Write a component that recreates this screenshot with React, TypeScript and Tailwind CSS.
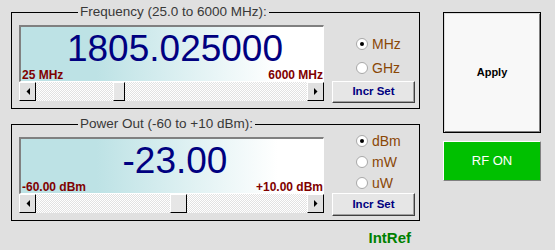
import type { ReactNode } from "react";

type Option = { label: string; checked?: boolean };

function GroupBox({ title, children }: { title: string; children: ReactNode }) {
  return (
    <div className="relative flex h-[97px] w-[409px] border border-black">
      <span className="absolute -top-[9px] left-[66px] bg-[#e0e0e0] px-[2px] text-[13.5px] leading-[16px] text-[#383838]">
        {title}
      </span>
      {children}
    </div>
  );
}

function Arrow({ dir }: { dir: "left" | "right" }) {
  return (
    <div className="flex h-full w-[17px] items-center justify-center border border-t-white border-l-white border-r-black border-b-black bg-[#e0e0e0]">
      <svg width="4" height="7" viewBox="0 0 4 7">
        {dir === "left" ? (
          <polygon points="4,0 4,7 0.5,3.5" fill="#000" />
        ) : (
          <polygon points="0,0 0,7 3.5,3.5" fill="#000" />
        )}
      </svg>
    </div>
  );
}

function ScrollBar({ thumbLeft }: { thumbLeft: "freq" | "power" }) {
  return (
    <div className="relative flex h-[19px] w-full bg-[repeating-conic-gradient(#ffffff_0_25%,#e2e2e2_0_50%)] bg-[length:2px_2px]">
      <Arrow dir="left" />
      <div className="flex-1" />
      <Arrow dir="right" />
      {thumbLeft === "freq" ? (
        <div className="absolute top-0 left-[94px] h-full w-[12px] border border-t-white border-l-white border-r-black border-b-black bg-[#e6e6e6]" />
      ) : (
        <div className="absolute top-0 left-[151px] h-full w-[17px] border border-t-white border-l-white border-r-black border-b-black bg-[#e6e6e6]" />
      )}
    </div>
  );
}

function Display({ value, min, max }: { value: string; min: string; max: string }) {
  return (
    <div className="flex h-[57px] w-[305px] flex-col border-2 border-r border-b border-t-[#808080] border-l-[#808080] border-r-white border-b-white bg-[linear-gradient(to_right,#bde2e5_25%,#ffffff_85%)]">
      <div className="pt-[3px] pl-[6px] text-center text-[37px] leading-none text-[#000080]">
        {value}
      </div>
      <div className="mt-auto flex h-[12px] justify-between pl-[1px] text-[12px] leading-none font-bold text-[#800000]">
        <span>{min}</span>
        <span>{max}</span>
      </div>
    </div>
  );
}

function Radio({ label, checked }: Option) {
  return (
    <div className="flex h-full items-center">
      <div className="flex h-[12px] w-[12px] items-center justify-center rounded-full border border-[#a8a8a8] bg-white">
        {checked && <div className="h-[4px] w-[4px] rounded-full bg-black" />}
      </div>
      <span className="ml-[4px] text-[14px] leading-none text-[#8a4706]">{label}</span>
    </div>
  );
}

function IncrSet({ h }: { h: string }) {
  return (
    <button
      type="button"
      className={[
        "flex w-[83px] items-center justify-center border border-t-white border-l-white border-r-[#404040] border-b-[#404040] bg-[#e6e6e6] text-[11.5px] font-bold text-[#000080] shadow-[inset_-1px_-1px_0_#a0a0a0]",
        h,
      ].join(" ")}
    >
      Incr Set
    </button>
  );
}

export default function App() {
  return (
    <div className="flex h-[250px] w-[555px] bg-[#e0e0e0] pl-[11px] font-['Liberation_Sans',Arial,sans-serif]">
      <div className="flex flex-col">
        <div className="mt-[12px]">
          <GroupBox title="Frequency (25.0 to 6000 MHz):">
            <div className="mt-[12px] ml-[7px] flex flex-col">
              <Display value="1805.025000" min="25 MHz" max="6000 MHz" />
              <ScrollBar thumbLeft="freq" />
            </div>
            <div className="ml-[8px] flex flex-col pt-[19px]">
              <div className="h-[24px] pl-[24px]">
                <Radio label="MHz" checked />
              </div>
              <div className="h-[24px] pl-[24px]">
                <Radio label="GHz" />
              </div>
              <div className="mt-[1px]">
                <IncrSet h="h-[22px]" />
              </div>
            </div>
          </GroupBox>
        </div>
        <div className="mt-[15px]">
          <GroupBox title="Power Out (-60 to +10 dBm):">
            <div className="mt-[12px] ml-[7px] flex flex-col">
              <Display value="-23.00" min="-60.00 dBm" max="+10.00 dBm" />
              <ScrollBar thumbLeft="power" />
            </div>
            <div className="ml-[8px] flex flex-col pt-[5px]">
              <div className="h-[21px] pl-[24px]">
                <Radio label="dBm" checked />
              </div>
              <div className="h-[21px] pl-[24px]">
                <Radio label="mW" />
              </div>
              <div className="h-[21px] pl-[24px]">
                <Radio label="uW" />
              </div>
              <IncrSet h="h-[23px]" />
            </div>
          </GroupBox>
        </div>
        <div className="mt-[9px] mr-[9px] self-end text-[15px] leading-none font-bold text-[#008000]">
          IntRef
        </div>
      </div>

      <div className="ml-[23px] flex flex-col pt-[12px]">
        <button
          type="button"
          className="flex h-[121px] w-[98px] items-center justify-center border border-black bg-[#f8f8f8] text-[11px] font-bold text-black shadow-[inset_1px_1px_0_#dcdcdc,inset_-1px_-1px_0_#808080]"
        >
          Apply
        </button>
        <button
          type="button"
          className="mt-[8px] flex h-[40px] w-[98px] items-center justify-center border border-t-white border-l-white border-r-[#808080] border-b-[#808080] bg-[#00c000] text-[13px] text-white"
        >
          RF ON
        </button>
      </div>
    </div>
  );
}
